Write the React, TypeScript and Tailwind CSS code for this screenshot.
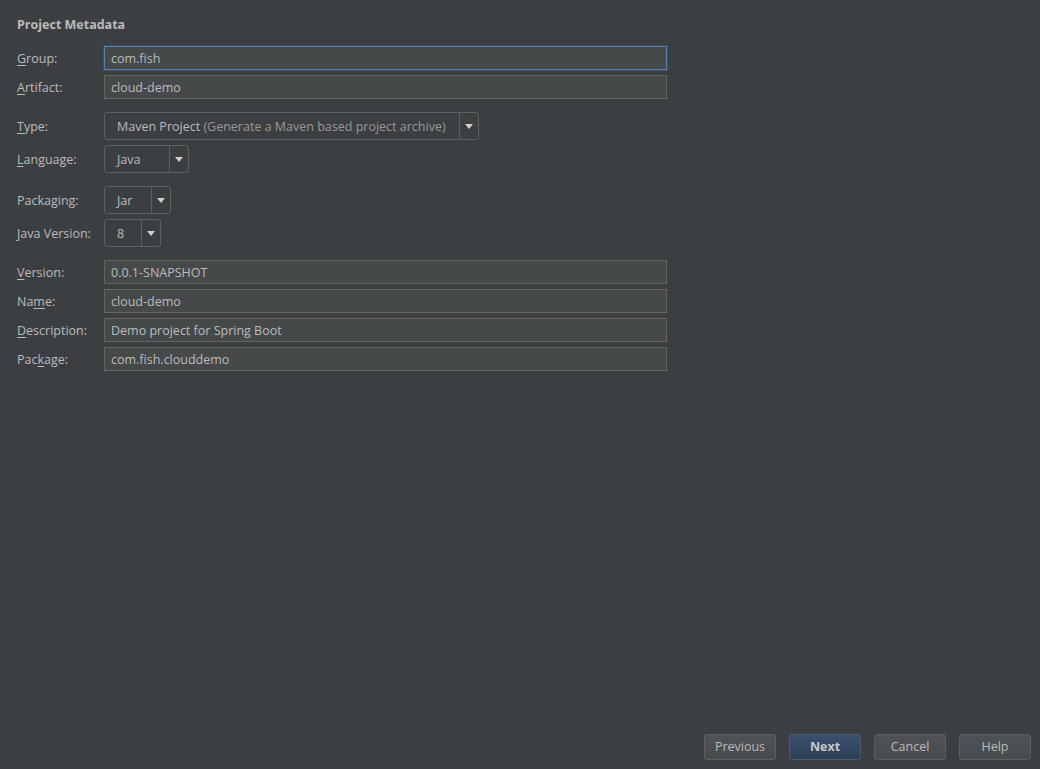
import type { ReactNode } from 'react';

const font = { fontFamily: '"Open Sans", "Liberation Sans", sans-serif' };

function Label({ text, u }: { text: string; u: number }) {
  return (
    <>
      {text.slice(0, u)}
      <span className="underline underline-offset-2">{text[u]}</span>
      {text.slice(u + 1)}
    </>
  );
}

function Row({ label, children }: { label: ReactNode; children: ReactNode }) {
  return (
    <div className="flex items-center">
      <div className="w-[87px] shrink-0 text-[12.5px] leading-[17px] text-[#bbbbbb]">{label}</div>
      {children}
    </div>
  );
}

function TextField({ value, focused = false }: { value: string; focused?: boolean }) {
  return (
    <div
      className={`flex h-[24px] w-[563px] items-center border bg-[#45494a] pl-[6px] text-[12.5px] leading-[17px] text-[#bbbbbb] ${
        focused ? 'border-[#5482b3] shadow-[0_0_0_1px_rgba(70,110,160,0.35)]' : 'border-[#646464]'
      }`}
    >
      {value}
    </div>
  );
}

function Combo({ width, children }: { width: string; children: ReactNode }) {
  return (
    <div className={`flex h-[28px] ${width} items-stretch rounded-[3px] border border-[#5e6060]`}>
      <div className="flex flex-1 items-center pl-[12px] text-[12.5px] leading-[17px] text-[#bbbbbb]">{children}</div>
      <div className="flex w-[19px] items-center justify-center border-l border-[#5e6060]">
        <svg width="8" height="5" viewBox="0 0 8 5">
          <path d="M0 0h8L4 5z" fill="#d0d0d0" />
        </svg>
      </div>
    </div>
  );
}

function Button({ text, primary = false }: { text: string; primary?: boolean }) {
  return (
    <button
      className={`flex h-[26px] w-[72px] items-center justify-center rounded-[3px] border text-[12.5px] ${
        primary
          ? 'border-[#4b5b70] bg-gradient-to-b from-[#3a506c] to-[#2c3f58] font-bold text-[#c8c8c8]'
          : 'border-[#5e6060] bg-gradient-to-b from-[#4f5355] to-[#474b4d] text-[#bbbbbb]'
      }`}
    >
      {text}
    </button>
  );
}

export default function App() {
  return (
    <div className="flex h-[769px] w-[1040px] flex-col bg-[#3c3f41]" style={font}>
      <div className="pl-[17px] pt-[17px]">
        <div className="h-[16px] text-[12.5px] font-bold leading-[16px] text-[#bbbbbb]">Project Metadata</div>

        <div className="mt-[13px] flex flex-col gap-[5px]">
          <Row label={<Label text="Group:" u={0} />}>
            <TextField value="com.fish" focused />
          </Row>
          <Row label={<Label text="Artifact:" u={0} />}>
            <TextField value="cloud-demo" />
          </Row>
        </div>

        <div className="mt-[13px] flex flex-col gap-[5px]">
          <Row label={<Label text="Type:" u={0} />}>
            <Combo width="w-[375px]">
              Maven Project&nbsp;<span className="text-[#999999]">(Generate a Maven based project archive)</span>
            </Combo>
          </Row>
          <Row label={<Label text="Language:" u={0} />}>
            <Combo width="w-[85px]">Java</Combo>
          </Row>
        </div>

        <div className="mt-[13px] flex flex-col gap-[5px]">
          <Row label={<Label text="Packaging:" u={5} />}>
            <Combo width="w-[67px]">Jar</Combo>
          </Row>
          <Row label={<Label text="Java Version:" u={0} />}>
            <Combo width="w-[57px]">8</Combo>
          </Row>
        </div>

        <div className="mt-[13px] flex flex-col gap-[5px]">
          <Row label={<Label text="Version:" u={0} />}>
            <TextField value="0.0.1-SNAPSHOT" />
          </Row>
          <Row label={<Label text="Name:" u={2} />}>
            <TextField value="cloud-demo" />
          </Row>
          <Row label={<Label text="Description:" u={0} />}>
            <TextField value="Demo project for Spring Boot" />
          </Row>
          <Row label={<Label text="Package:" u={3} />}>
            <TextField value="com.fish.clouddemo" />
          </Row>
        </div>
      </div>

      <div className="flex-1" />

      <div className="flex justify-end gap-[13px] pb-[9px] pr-[9px]">
        <Button text="Previous" />
        <Button text="Next" primary />
        <Button text="Cancel" />
        <Button text="Help" />
      </div>
    </div>
  );
}
